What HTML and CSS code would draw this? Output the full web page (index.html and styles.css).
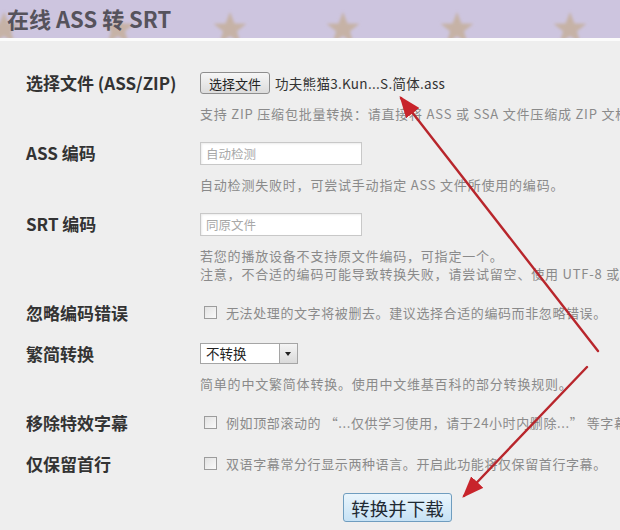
FILE: index.html
```html
<!DOCTYPE html>
<html lang="zh-CN">
<head>
  <meta charset="UTF-8">
  <meta name="viewport" content="width=device-width, initial-scale=1.0">
  <title>在线 ASS 转 SRT</title>
  <link rel="stylesheet" href="styles.css">
</head>
<body>
  <div class="page-header">
    <!-- star pattern behind the title -->
    <svg class="header-stars" width="620" height="38" viewBox="0 0 620 38">
      <defs>
        <filter id="soft"><feGaussianBlur stdDeviation="1.4"/></filter>
        <polygon id="star" points="0,-17 4.5,-5.5 16.5,-5.3 7,2.2 10.3,14 0,7 -10.3,14 -7,2.2 -16.5,-5.3 -4.5,-5.5"/>
      </defs>
      <g fill="#c6b2a6" filter="url(#soft)">
        <use href="#star" x="4" y="29"/>
        <use href="#star" x="118" y="29"/>
        <use href="#star" x="230" y="29"/>
        <use href="#star" x="343" y="29"/>
        <use href="#star" x="457" y="29"/>
        <use href="#star" x="570" y="29"/>
      </g>
    </svg>
    <h1>在线 ASS 转 SRT</h1>
  </div>

  <form class="convert-form" onsubmit="return false">
    <div class="field">
      <label class="field-label">选择文件 (ASS/ZIP)</label>
      <div class="field-body">
        <div class="file-row">
          <button type="button" class="file-button">选择文件</button>
          <span class="file-name">功夫熊猫3.Kun...S.简体.ass</span>
        </div>
        <p class="help">支持 ZIP 压缩包批量转换：请直接将 ASS 或 SSA 文件压缩成 ZIP 文档</p>
      </div>
    </div>

    <div class="field">
      <label class="field-label">ASS 编码</label>
      <div class="field-body">
        <input class="text-input" type="text" placeholder="自动检测">
        <p class="help">自动检测失败时，可尝试手动指定 ASS 文件所使用的编码。</p>
      </div>
    </div>

    <div class="field">
      <label class="field-label">SRT 编码</label>
      <div class="field-body">
        <input class="text-input" type="text" placeholder="同原文件">
        <p class="help">若您的播放设备不支持原文件编码，可指定一个。<br>注意，不合适的编码可能导致转换失败，请尝试留空、使用 UTF-8 或</p>
      </div>
    </div>

    <div class="field">
      <label class="field-label">忽略编码错误</label>
      <div class="field-body check-row">
        <span class="checkbox"></span>
        <span class="check-text">无法处理的文字将被删去。建议选择合适的编码而非忽略错误。</span>
      </div>
    </div>

    <div class="field">
      <label class="field-label">繁简转换</label>
      <div class="field-body">
        <div class="select-box">
          <span class="select-value">不转换</span>
          <span class="select-arrow"></span>
        </div>
        <p class="help">简单的中文繁简体转换。使用中文维基百科的部分转换规则。</p>
      </div>
    </div>

    <div class="field">
      <label class="field-label">移除特效字幕</label>
      <div class="field-body check-row">
        <span class="checkbox"></span>
        <span class="check-text">例如顶部滚动的 “...仅供学习使用，请于24小时内删除...” 等字幕</span>
      </div>
    </div>

    <div class="field">
      <label class="field-label">仅保留首行</label>
      <div class="field-body check-row">
        <span class="checkbox"></span>
        <span class="check-text">双语字幕常分行显示两种语言。开启此功能将仅保留首行字幕。</span>
      </div>
    </div>

    <div class="actions">
      <button type="submit" class="submit-button">转换并下载</button>
    </div>
  </form>

  <!-- red pointer arrows drawn over the form -->
  <svg class="arrows" width="620" height="530" viewBox="0 0 620 530">
    <defs>
      <marker id="head" markerWidth="9" markerHeight="7" refX="8" refY="3.5" orient="auto" markerUnits="strokeWidth">
        <polygon points="0,0 9,3.5 0,7" fill="#c8242b"/>
      </marker>
    </defs>
    <g stroke="#b8262c" stroke-width="2.4" stroke-linecap="round" fill="none">
      <line x1="598" y1="351" x2="401" y2="98" marker-end="url(#head)"/>
      <line x1="587" y1="367" x2="464" y2="496" marker-end="url(#head)"/>
    </g>
  </svg>
</body>
</html>
```

FILE: styles.css
```css
body {
  margin: 0;
  width: 620px;
  height: 530px;
  overflow: hidden;
  position: relative;
  background-color: #eeeeee;
  font-family: "Noto Sans CJK SC", "Noto Sans", sans-serif;
  color: #333;
}

.page-header {
  position: relative;
  height: 38px;
  background-color: #cdc5df;
  border-bottom: 3px solid #fbfbfb;
  overflow: hidden;
}

.header-stars {
  position: absolute;
  top: 0;
  left: 0;
}

.page-header h1 {
  position: relative;
  margin: 0;
  padding-left: 7px;
  font-size: 22px;
  line-height: 36px;
  font-weight: bold;
  color: #56535c;
}

.convert-form {
  padding-top: 31px;
}

.field {
  display: flex;
  padding-left: 26px;
  margin-bottom: 19px;
}

.field-label {
  width: 174px;
  flex-shrink: 0;
  font-size: 17px;
  font-weight: bold;
  line-height: 22px;
  color: #333;
}

.field-body {
  flex: 1;
  min-width: 0;
}

.file-row {
  display: flex;
  align-items: center;
  height: 22px;
}

.file-button {
  height: 22px;
  padding: 0 8px;
  font-family: inherit;
  font-size: 13px;
  color: #222;
  background: linear-gradient(#f6f6f6, #dcdcdc);
  border: 1px solid #8e8e8e;
  border-radius: 3px;
}

.file-name {
  margin-left: 5px;
  font-size: 13.5px;
  letter-spacing: 0.3px;
  color: #333;
  white-space: nowrap;
}

.help {
  margin: 11px 0 0;
  font-size: 13px;
  letter-spacing: 0.8px;
  line-height: 18px;
  color: #8a8a8a;
  white-space: nowrap;
}

.text-input {
  display: block;
  box-sizing: border-box;
  width: 162px;
  height: 23px;
  margin: 0;
  padding: 0 5px;
  font-family: inherit;
  font-size: 12.5px;
  border: 1px solid #c8c8c8;
  box-shadow: inset 1px 1px 2px rgba(0, 0, 0, 0.08);
  background: #fff;
}

.text-input::placeholder {
  color: #a8a8a8;
}

.check-row {
  display: flex;
  align-items: center;
  height: 21px;
}

.checkbox {
  flex-shrink: 0;
  box-sizing: border-box;
  width: 13px;
  height: 13px;
  margin-left: 4px;
  margin-right: 9px;
  border: 1px solid #9c9c9c;
  background: linear-gradient(135deg, #e2e2e2, #fafafa);
}

.check-text {
  font-size: 13px;
  letter-spacing: 0.6px;
  color: #8a8a8a;
  white-space: nowrap;
}

.select-box {
  display: flex;
  box-sizing: border-box;
  width: 98px;
  height: 21px;
  border: 1px solid #a5a5a5;
  background: #fff;
}

.select-value {
  flex: 1;
  padding-left: 5px;
  font-size: 13.5px;
  line-height: 19px;
  color: #222;
}

.select-arrow {
  position: relative;
  width: 17px;
  border-left: 1px solid #a5a5a5;
  background: linear-gradient(#f4f4f4, #dadada);
}

.select-arrow::after {
  content: "";
  position: absolute;
  left: 5px;
  top: 8px;
  border-left: 3.5px solid transparent;
  border-right: 3.5px solid transparent;
  border-top: 4px solid #222;
}

.actions {
  display: flex;
  padding-left: 343px;
  margin-top: -1px;
}

.submit-button {
  width: 109px;
  height: 29px;
  padding: 0;
  font-family: inherit;
  font-size: 18.5px;
  color: #1f2a33;
  background: linear-gradient(#eaf5fc, #c6e2f5);
  border: 1px solid #6f9dbf;
  border-radius: 3px;
}

.arrows {
  position: absolute;
  top: 0;
  left: 0;
  pointer-events: none;
}
```
